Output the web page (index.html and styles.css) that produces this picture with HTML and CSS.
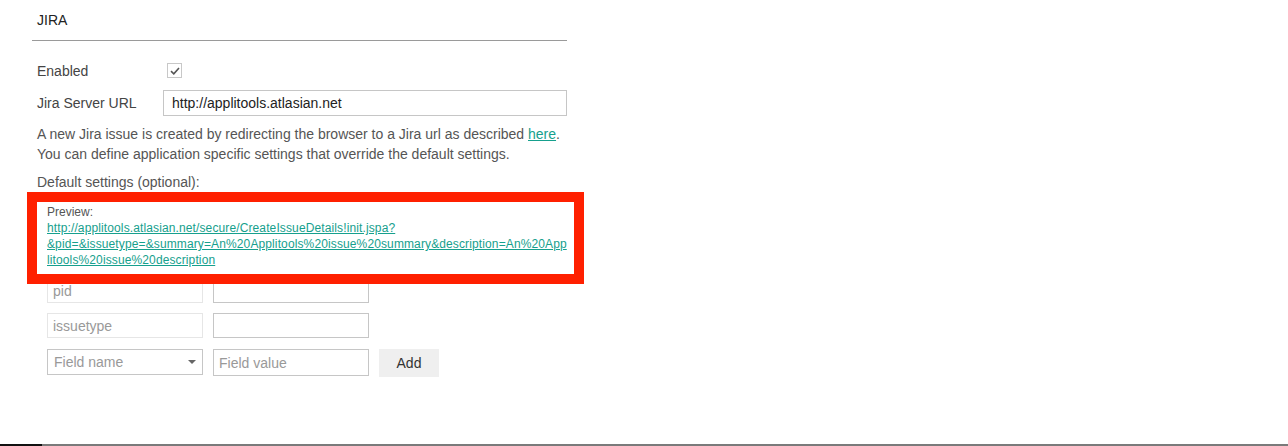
FILE: index.html
```html
<!DOCTYPE html>
<html lang="en">

<head>
    <meta charset="UTF-8">
    <title>JIRA settings</title>
    <link rel="stylesheet" href="styles.css">
</head>

<body>
    <div class="page">
        <div class="section">
            <h2 class="section-title">JIRA</h2>

            <div class="form-row first">
                <label class="form-label">Enabled</label>
                <span class="checkbox">
                    <svg width="10" height="8" viewBox="0 0 10 8">
                        <path d="M1 4.2 L3.8 6.8 L9 1" fill="none" stroke="#555" stroke-width="1.6" />
                    </svg>
                </span>
            </div>

            <div class="form-row">
                <label class="form-label">Jira Server URL</label>
                <input class="text-input url" type="text" value="http://applitools.atlasian.net">
            </div>

            <p class="help">
                A new Jira issue is created by redirecting the browser to a Jira url as described <a href="#">here</a>.<br>
                You can define application specific settings that override the default settings.
            </p>

            <div class="subtitle">Default settings (optional):</div>

            <!-- preview (highlighted) -->
            <div class="preview">
                <div class="preview-title">Preview:</div>
                <a href="#" class="preview-link">http://applitools.atlasian.net/secure/CreateIssueDetails!init.jspa?<br>&amp;pid=&amp;issuetype=&amp;summary=An%20Applitools%20issue%20summary&amp;description=An%20App<br>litools%20issue%20description</a>
            </div>

            <div class="fields">
                <div class="field-row">
                    <input class="text-input key" type="text" value="pid" disabled>
                    <input class="text-input val" type="text">
                </div>
                <div class="field-row">
                    <input class="text-input key" type="text" value="issuetype" disabled>
                    <input class="text-input val" type="text">
                </div>
                <div class="field-row last">
                    <div class="select">
                        <span>Field name</span>
                        <span class="caret"></span>
                    </div>
                    <input class="text-input val" type="text" placeholder="Field value">
                    <button class="btn">Add</button>
                </div>
            </div>
        </div>
    </div>
    <div class="bottom-strip"><span class="dark"></span></div>
</body>

</html>
```

FILE: styles.css
```css
body {
    margin: 0;
    padding: 0;
    font-family: "Liberation Sans", Arial, sans-serif;
    font-size: 14px;
    color: #444;
    background: #fff;
    height: 446px;
    overflow: hidden;
}

.page {
    height: 444px;
}

.section {
    width: 535px;
    margin-left: 32px;
}

.section-title {
    margin: 0;
    padding: 10px 5px 10px;
    font-size: 14px;
    line-height: 20px;
    font-weight: normal;
    color: #222;
    border-bottom: 1px solid #9a9a9a;
}

.form-row {
    display: flex;
    align-items: center;
    height: 25px;
    padding-left: 5px;
    margin-top: 7px;
}

.form-row.first {
    margin-top: 17px;
}

.form-label {
    width: 126px;
    flex-shrink: 0;
}

.checkbox {
    display: flex;
    align-items: center;
    justify-content: center;
    width: 13px;
    height: 13px;
    margin-left: 4px;
    border: 1px solid #c8c8c8;
    background: #fff;
}

.text-input {
    box-sizing: border-box;
    height: 25px;
    border: 1px solid #c6c6c6;
    padding: 0 5px;
    font-family: inherit;
    font-size: 14px;
    color: #222;
    background: #fff;
    outline: none;
}

.text-input.url {
    flex: 1;
    height: 26px;
    padding: 0 8px;
}

.text-input::placeholder {
    color: #999;
}

.help {
    margin: 9px 0 0;
    padding-left: 5px;
    line-height: 20px;
    color: #555;
}

.help a {
    color: #16a08d;
}

.subtitle {
    margin-top: 8px;
    padding-left: 5px;
    line-height: 20px;
    color: #555;
}

.preview {
    position: relative;
    z-index: 1;
    box-sizing: border-box;
    width: 557px;
    margin-left: -5px;
    margin-bottom: -6px;
    padding: 2px 10px 6px;
    border: 10px solid #ff2000;
    background: #fff;
    font-size: 12px;
    line-height: 16px;
}

.preview-title {
    color: #555;
}

.preview-link {
    color: #16a08d;
    white-space: nowrap;
    letter-spacing: 0.12px;
}

.fields {
    padding-left: 15px;
}

.field-row {
    display: flex;
    gap: 10px;
    margin-bottom: 10px;
}

.field-row.last {
    margin-top: 11px;
}

.text-input.key,
.text-input.val {
    width: 156px;
}

.text-input.key {
    border-color: #e6e6e6;
    color: #999;
}

.select {
    box-sizing: border-box;
    display: flex;
    align-items: center;
    justify-content: space-between;
    width: 156px;
    height: 26px;
    padding: 0 6px;
    border: 1px solid #c6c6c6;
    color: #999;
}

.caret {
    width: 0;
    height: 0;
    border-left: 4px solid transparent;
    border-right: 4px solid transparent;
    border-top: 4px solid #666;
}

.field-row.last .text-input.val {
    height: 27px;
}

.btn {
    width: 60px;
    height: 28px;
    border: none;
    background: #efefef;
    font-family: inherit;
    font-size: 14px;
    color: #333;
}

.bottom-strip {
    height: 2px;
    background: #7a7a7a;
}

.bottom-strip .dark {
    display: block;
    width: 42px;
    height: 2px;
    background: #111;
}
```
